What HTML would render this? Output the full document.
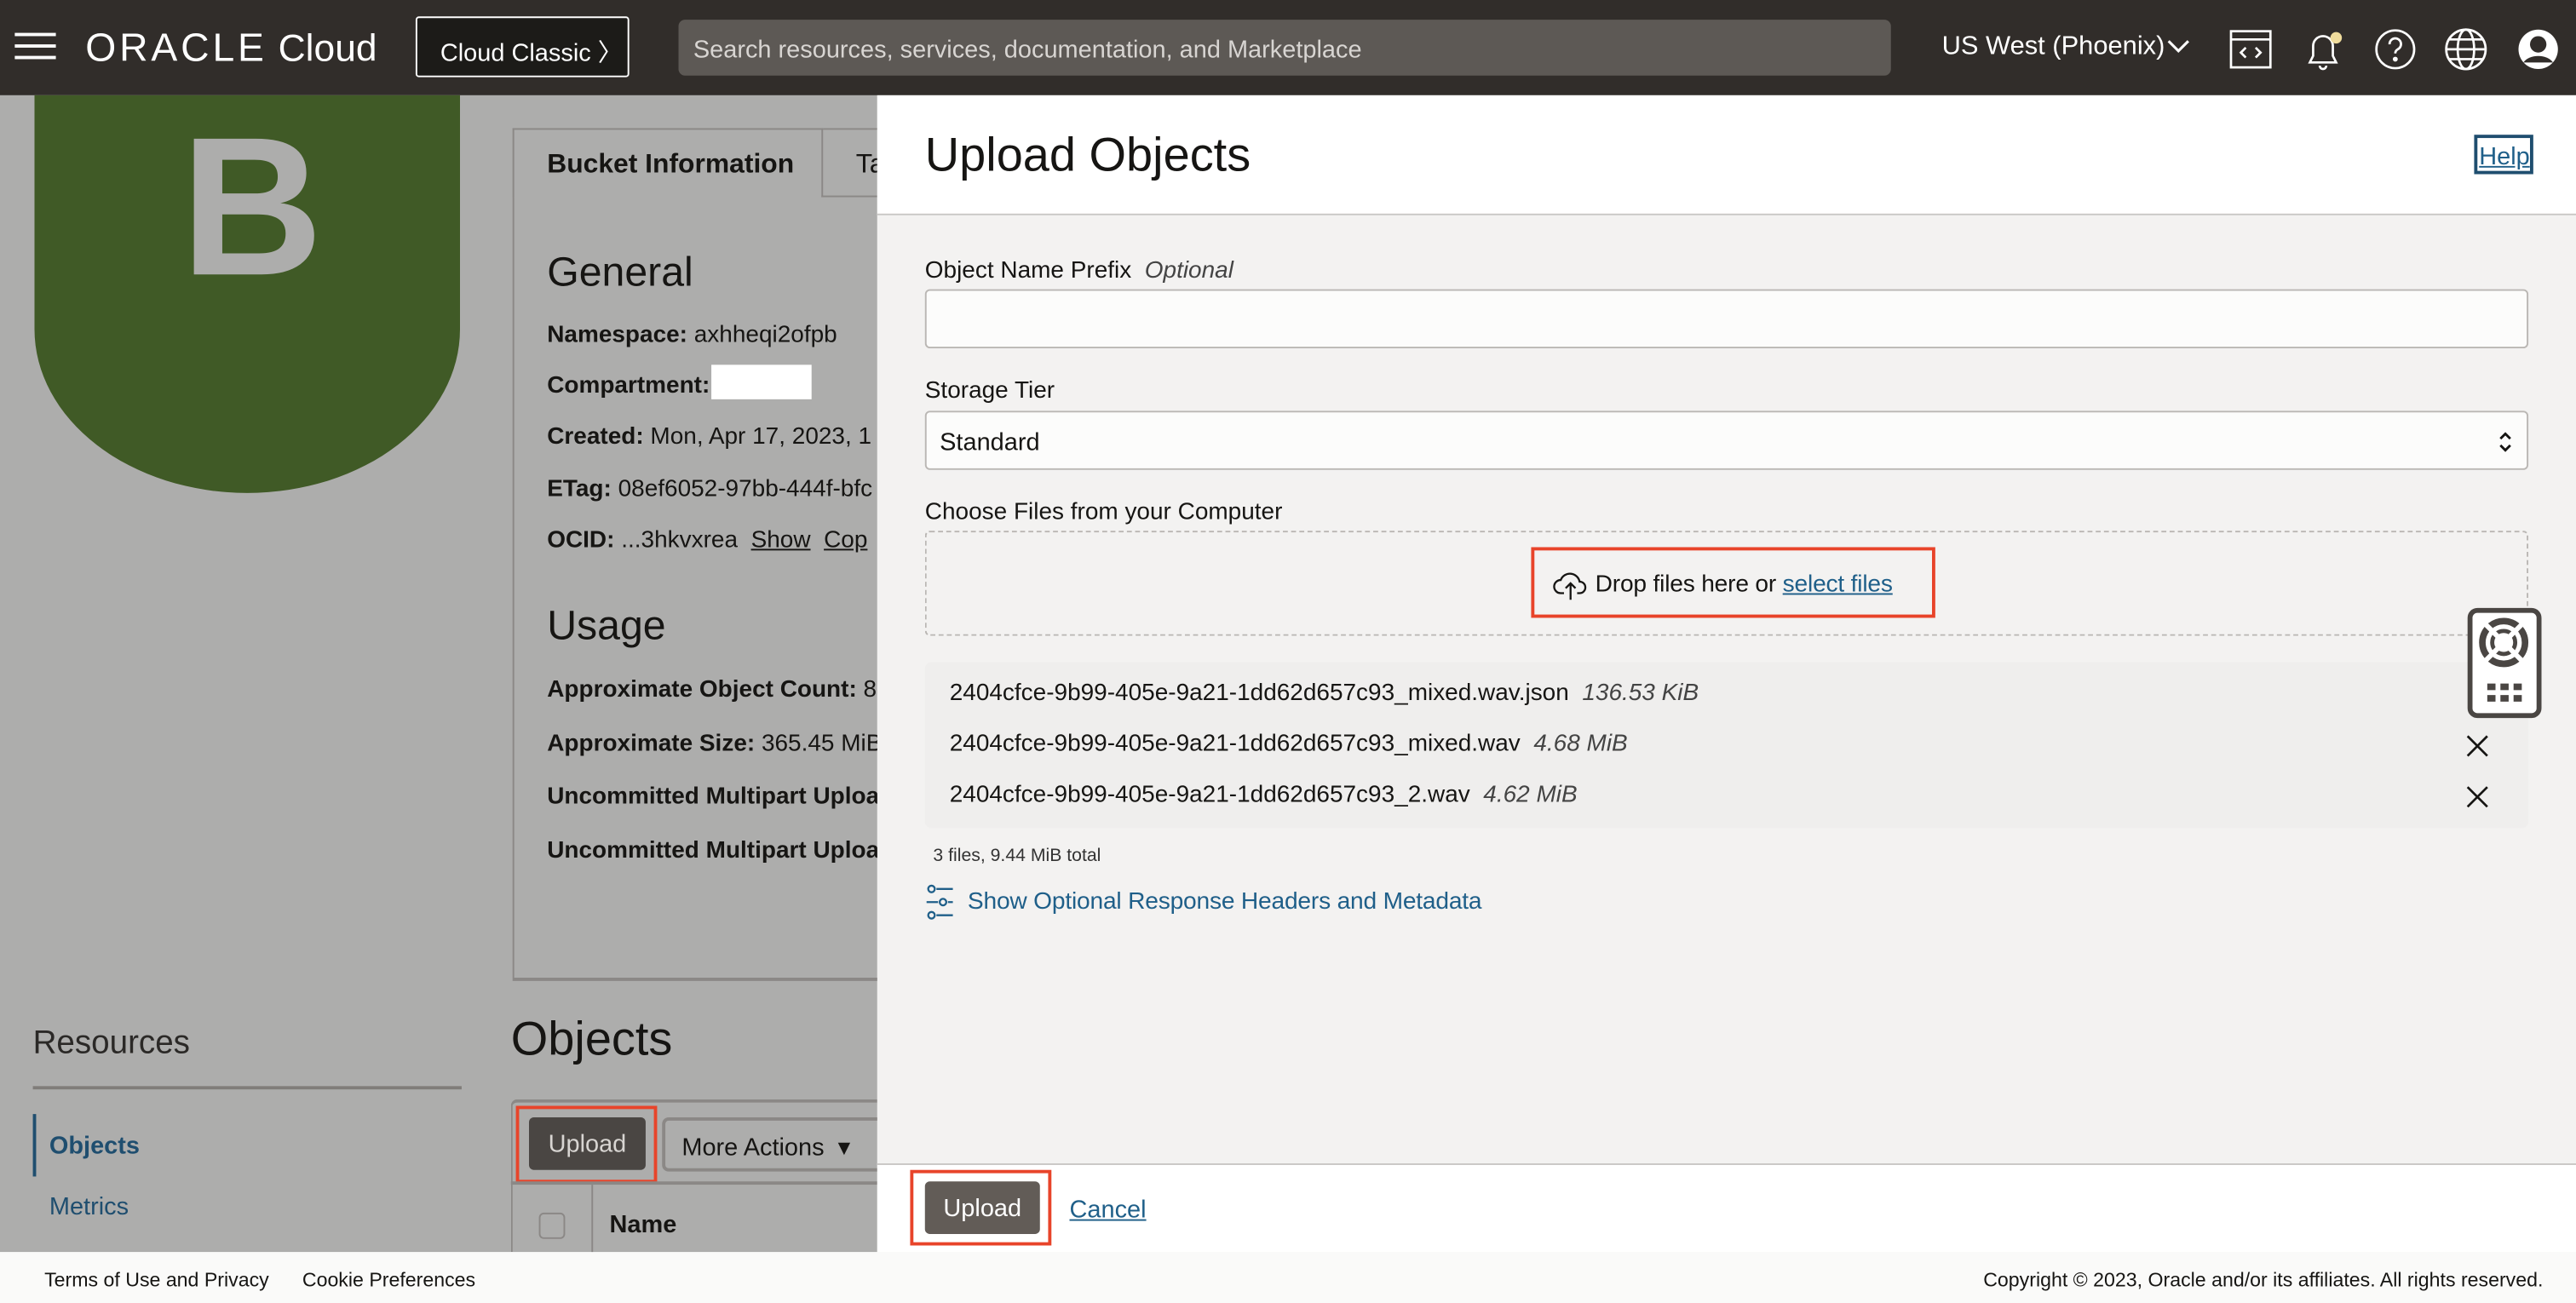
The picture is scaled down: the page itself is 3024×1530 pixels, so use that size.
<!DOCTYPE html>
<html><head><meta charset="utf-8"><style>
*{box-sizing:border-box;margin:0;padding:0}
html,body{width:3024px;height:1530px;overflow:hidden;background:#fff}
#w{width:1568px;height:793px;transform:scale(1.92857,1.9294);transform-origin:0 0;position:relative;font-family:"Liberation Sans",sans-serif;color:#161513}
.a{position:absolute}
.top{left:0;top:0;width:1568px;height:58px;background:#312d2a}
.bg{left:0;top:58px;width:534px;height:704px;background:#adadac}
.b{font-weight:bold}
.lbl{font-size:14.5px;color:#161513}
.lnk{color:#1f5f89;text-decoration:underline}
</style></head><body><div id="w">
<div class="a top">
 <div class="a" style="left:9px;top:20px;width:25px;height:2px;background:#fff;box-shadow:0 7px 0 #fff,0 14px 0 #fff"></div>
 <div class="a" style="left:52px;top:16px;color:#fff;font-size:24px"><span style="letter-spacing:2px">ORACLE</span> <span style="font-size:23px">Cloud</span></div>
 <div class="a" style="left:253px;top:10px;width:130px;height:37px;border:1px solid #fff;border-radius:2px;background:#1c1b18;color:#fff;font-size:15px;padding:10px 0 0 14px">Cloud Classic 〉</div>
 <div class="a" style="left:413px;top:12px;width:738px;height:34px;border-radius:4px;background:#5d5955;color:#d8d5d2;font-size:15px;padding:10px 9px">Search resources, services, documentation, and Marketplace</div>
 <div class="a" style="left:1182px;top:20px;color:#fff;font-size:16px">US West (Phoenix)</div>
 <svg class="a" style="left:1318px;top:22px" width="16" height="12" fill="none" stroke="#fff" stroke-width="1.6"><path d="M2 3l6 6 6-6"/></svg>
 <svg class="a" style="left:1356px;top:16px" width="28" height="28" viewBox="0 0 28 28" fill="none" stroke="#fff" stroke-width="1.4"><rect x="2" y="3" width="24" height="22"/><line x1="2" y1="8" x2="26" y2="8"/><path d="M11 13l-3 3 3 3M17 13l3 3-3 3"/></svg>
 <svg class="a" style="left:1400px;top:16px" width="28" height="28" viewBox="0 0 28 28" fill="none" stroke="#fff" stroke-width="1.4"><path d="M6 22h16l-2-4v-6a6 6 0 0 0-12 0v6z"/><path d="M12 24a2 2 0 0 0 4 0"/><circle cx="22" cy="7" r="3.5" fill="#f0dc9c" stroke="none"/></svg>
 <svg class="a" style="left:1444px;top:16px" width="28" height="28" viewBox="0 0 28 28" fill="none" stroke="#fff" stroke-width="1.4"><circle cx="14" cy="14" r="11.5"/><path d="M10.5 11a3.5 3.5 0 1 1 5 3c-1 .6-1.5 1.3-1.5 2.5"/><circle cx="14" cy="20" r=".8" fill="#fff"/></svg>
 <svg class="a" style="left:1487px;top:16px" width="28" height="28" viewBox="0 0 28 28" fill="none" stroke="#fff" stroke-width="1.4"><circle cx="14" cy="14" r="12"/><ellipse cx="14" cy="14" rx="5" ry="12"/><line x1="2" y1="14" x2="26" y2="14"/><path d="M4 8h20M4 20h20"/></svg>
 <svg class="a" style="left:1531px;top:16px" width="28" height="28" viewBox="0 0 28 28"><circle cx="14" cy="14" r="12" fill="#fff"/><circle cx="14" cy="11" r="5" fill="#312d2a"/><path d="M5 22a10 7 0 0 1 18 0" fill="#312d2a"/></svg>
</div>
<div class="a bg">
 <div class="a" style="left:21px;top:0;width:259px;height:242px;background:#405a26;border-radius:0 0 130px 130px/0 0 100px 100px"></div>
 <div class="a b" style="left:110px;top:2px;font-size:120px;color:#adadac;line-height:1.1">B</div>
 <div class="a" style="left:312px;top:20px;width:230px;height:519px;border:1px solid #8b8886;border-bottom:2px solid #8b8886"></div>
 <div class="a" style="left:312px;top:20px;width:189px;height:42px;background:#adadac;border:1px solid #8b8886;border-bottom:none"></div>
 <div class="a" style="left:500px;top:61px;width:34px;height:1px;background:#8b8886"></div>
 <div class="a b" style="left:333px;top:33px;font-size:16.5px">Bucket Information</div>
 <div class="a" style="left:521px;top:33px;font-size:16.5px">Ta</div>
 <div class="a" style="left:333px;top:94px;font-size:25px">General</div>
 <div class="a lbl" style="left:333px;top:138px"><b>Namespace:</b> axhheqi2ofpb</div>
 <div class="a lbl" style="left:333px;top:169px"><b>Compartment:</b></div>
 <div class="a" style="left:433px;top:164px;width:61px;height:21px;background:#fff"></div>
 <div class="a lbl" style="left:333px;top:200px;white-space:nowrap"><b>Created:</b> Mon, Apr 17, 2023, 1</div>
 <div class="a lbl" style="left:333px;top:232px;white-space:nowrap"><b>ETag:</b> 08ef6052-97bb-444f-bfc</div>
 <div class="a lbl" style="left:333px;top:263px;white-space:nowrap"><b>OCID:</b> ...3hkvxrea &nbsp;<u>Show</u> &nbsp;<u>Cop</u></div>
 <div class="a" style="left:333px;top:309px;font-size:25px">Usage</div>
 <div class="a lbl b" style="left:333px;top:354px;white-space:nowrap">Approximate Object Count: <span style="font-weight:normal">8</span></div>
 <div class="a lbl" style="left:333px;top:387px;white-space:nowrap"><b>Approximate Size:</b> 365.45 MiB</div>
 <div class="a lbl b" style="left:333px;top:419px;white-space:nowrap">Uncommitted Multipart Uploa</div>
 <div class="a lbl b" style="left:333px;top:452px;white-space:nowrap">Uncommitted Multipart Uploa</div>
 <div class="a" style="left:20px;top:566px;font-size:20px;color:#2b2927">Resources</div>
 <div class="a" style="left:20px;top:603px;width:261px;height:2px;background:#807d7a"></div>
 <div class="a" style="left:20px;top:620px;width:2px;height:38px;background:#1f4e6f"></div>
 <div class="a b" style="left:30px;top:631px;font-size:15px;color:#1f4e6f">Objects</div>
 <div class="a" style="left:30px;top:668px;font-size:15px;color:#1f4e6f">Metrics</div>
 <div class="a" style="left:311px;top:559px;font-size:29px">Objects</div>
 <div class="a" style="left:311px;top:611px;width:223px;height:93px;border-top:2px solid #8b8886;border-left:1px solid #8b8886;border-radius:4px 0 0 0"></div>
 <div class="a" style="left:314px;top:615px;width:86px;height:47px;border:2px solid #e8442a"></div>
 <div class="a" style="left:322px;top:622px;width:71px;height:32px;background:#4a4643;border-radius:3px;color:#d8d5d2;font-size:15px;text-align:center;padding-top:8px">Upload</div>
 <div class="a" style="left:403px;top:622px;width:140px;height:33px;border:2px solid #8b8886;border-radius:4px;font-size:15px;padding:7px 0 0 10px;white-space:nowrap">More Actions &nbsp;▾</div>
 <div class="a" style="left:311px;top:661px;width:223px;height:2px;background:#8b8886"></div>
 <div class="a" style="left:360px;top:663px;width:1px;height:41px;background:#8b8886"></div>
 <div class="a" style="left:328px;top:680px;width:16px;height:16px;border:1px solid #8b8886;border-radius:3px"></div>
 <div class="a b" style="left:371px;top:679px;font-size:15px">Name</div>
</div>
<div class="a" style="left:534px;top:58px;width:1034px;height:704px;background:#f3f2f1">
 <div class="a" style="left:0;top:0;width:1034px;height:73px;background:#fff;border-bottom:1px solid #c9c7c5"></div>
 <div class="a" style="left:29px;top:21px;font-size:29px">Upload Objects</div>
 <div class="a" style="left:972px;top:24px;width:36px;height:24px;border:2px solid #1f4e6f;font-size:15px;padding:3px 0 0 1px" ><span class="lnk">Help</span></div>
 <div class="a" style="left:29px;top:99px;font-size:14.5px">Object Name Prefix &nbsp;<i style="color:#444">Optional</i></div>
 <div class="a" style="left:29px;top:118px;width:976px;height:36px;background:#fcfcfb;border:1px solid #bab7b4;border-radius:3px"></div>
 <div class="a" style="left:29px;top:172px;font-size:14.5px">Storage Tier</div>
 <div class="a" style="left:29px;top:192px;width:976px;height:36px;background:#fcfcfb;border:1px solid #bab7b4;border-radius:3px;font-size:15px;padding:10px 8px">Standard</div>
 <svg class="a" style="left:986px;top:203px" width="10" height="16" fill="none" stroke="#161513" stroke-width="1.5"><path d="M2 6l3-3 3 3M2 10l3 3 3-3"/></svg>
 <div class="a" style="left:29px;top:246px;font-size:14.5px">Choose Files from your Computer</div>
 <div class="a" style="left:29px;top:265px;width:976px;height:64px;border:1px dashed #b9b6b3;border-radius:3px"></div>
 <div class="a" style="left:398px;top:275px;width:246px;height:43px;border:2px solid #e8442a"></div>
 <svg class="a" style="left:411px;top:288px" width="22" height="20" viewBox="0 0 22 20" fill="none" stroke="#161513" stroke-width="1.2"><path d="M7 15H5a4 4 0 0 1 0-8 6 6 0 0 1 11.5 1 3.5 3.5 0 0 1 0 7H15"/><path d="M11 19V9M8 12l3-3 3 3"/></svg>
 <div class="a" style="left:437px;top:290px;font-size:14.6px;white-space:nowrap;letter-spacing:-0.1px">Drop files here or <span class="lnk">select files</span></div>
 <div class="a" style="left:29px;top:345px;width:976px;height:101px;background:#efeeed;border-radius:4px"></div>
 <div class="a" style="left:44px;top:356px;font-size:14.5px;white-space:nowrap">2404cfce-9b99-405e-9a21-1dd62d657c93_mixed.wav.json &nbsp;<i style="color:#444">136.53 KiB</i></div>
 <div class="a" style="left:44px;top:387px;font-size:14.5px;white-space:nowrap">2404cfce-9b99-405e-9a21-1dd62d657c93_mixed.wav &nbsp;<i style="color:#444">4.68 MiB</i></div>
 <div class="a" style="left:44px;top:418px;font-size:14.5px;white-space:nowrap">2404cfce-9b99-405e-9a21-1dd62d657c93_2.wav &nbsp;<i style="color:#444">4.62 MiB</i></div>
 <svg class="a" style="left:966px;top:388px" width="16" height="16" stroke="#161513" stroke-width="1.4"><path d="M2 2l12 12M14 2L2 14"/></svg>
 <svg class="a" style="left:966px;top:419px" width="16" height="16" stroke="#161513" stroke-width="1.4"><path d="M2 2l12 12M14 2L2 14"/></svg>
 <div class="a" style="left:34px;top:457px;font-size:11px;color:#333">3 files, 9.44 MiB total</div>
 <svg class="a" style="left:29px;top:480px" width="20" height="22" fill="none" stroke="#1f5f89" stroke-width="1.2"><circle cx="4" cy="3" r="2"/><path d="M7 3h10M1 11h7"/><circle cx="11" cy="11" r="2"/><path d="M14 11h3"/><circle cx="4" cy="19" r="2"/><path d="M7 19h10"/></svg>
 <div class="a" style="left:55px;top:483px;font-size:14.6px;color:#1f5f89;letter-spacing:-0.1px">Show Optional Response Headers and Metadata</div>
 <div class="a" style="left:968px;top:312px;width:45px;height:67px;background:#fff;border:3px solid #4a4643;border-radius:6px"></div>
 <svg class="a" style="left:973px;top:316px" width="34" height="34" viewBox="0 0 34 34"><circle cx="17" cy="17" r="13" fill="none" stroke="#4a4643" stroke-width="4"/><circle cx="17" cy="17" r="7" fill="none" stroke="#4a4643" stroke-width="2.5"/><path d="M17 17L5 5M17 17L29 5M17 17L5 29M17 17L29 29" stroke="#fff" stroke-width="3"/><circle cx="17" cy="17" r="5" fill="#fff"/></svg>
 <div class="a" style="left:980px;top:358px;width:5px;height:4px;background:#4a4643;box-shadow:8px 0 #4a4643,16px 0 #4a4643,0 7px #4a4643,8px 7px #4a4643,16px 7px #4a4643"></div>
 <div class="a" style="left:0;top:650px;width:1034px;height:54px;background:#fff;border-top:1px solid #c9c7c5"></div>
 <div class="a" style="left:20px;top:654px;width:86px;height:46px;border:2px solid #e8442a"></div>
 <div class="a" style="left:29px;top:661px;width:70px;height:32px;background:#625c57;border-radius:3px;color:#fff;font-size:15px;text-align:center;padding-top:8px">Upload</div>
 <div class="a lnk" style="left:117px;top:670px;font-size:15px">Cancel</div>
</div>
<div class="a" style="left:0;top:762px;width:1568px;height:31px;background:#fafaf9;font-size:12px">
 <span class="a" style="left:27px;top:10px">Terms of Use and Privacy</span>
 <span class="a" style="left:184px;top:10px">Cookie Preferences</span>
 <span class="a" style="right:20px;top:10px">Copyright © 2023, Oracle and/or its affiliates. All rights reserved.</span>
</div>
</div></body></html>
